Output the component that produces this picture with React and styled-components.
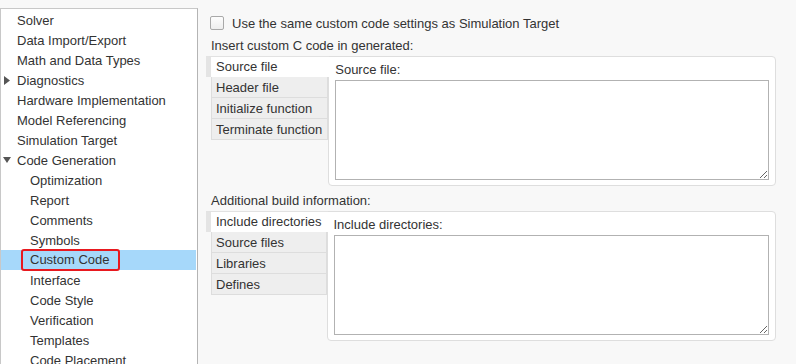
import styled, { createGlobalStyle } from "styled-components";

const GlobalStyle = createGlobalStyle`
    html, body {
        margin: 0;
        padding: 0;
        background: #f8f8f8;
    }
    body {
        font-family: "Liberation Sans", Arial, sans-serif;
        font-size: 13px;
        color: #333;
    }
`;

const Page = styled.div`
    display: flex;
    height: 364px;
    overflow: hidden;
`;

const Sidebar = styled.nav`
    flex: 0 0 198px;
    margin-top: 8px;
    padding-top: 1px;
    background: #fff;
    border-top: 1px solid #c8c8c8;
    border-left: 1px solid #c8c8c8;
    border-right: 1px solid #b4b4b4;
    box-sizing: border-box;
`;

const TreeRow = styled.div`
    display: flex;
    align-items: center;
    height: 20px;
    margin-right: 1px;
    padding-left: ${(p) => (p.$level ? "29px" : "3px")};
    background: ${(p) => (p.$selected ? "#a6d8fa" : "transparent")};
    white-space: nowrap;
`;

const Arrow = styled.span`
    display: flex;
    align-items: center;
    width: 13px;
    height: 20px;
    color: #555;
`;

const Marked = styled.span`
    display: inline-block;
    height: 22px;
    line-height: 18px;
    box-sizing: border-box;
    margin-left: -9px;
    padding: 0 9px 0 7px;
    border: 2px solid #e8191f;
    border-radius: 3px;
`;

const Main = styled.main`
    flex: 1;
    display: flex;
    flex-direction: column;
    padding: 13px 20px 0 8px;
`;

const CheckRow = styled.label`
    display: flex;
    align-items: center;
    gap: 8px;
    height: 20px;
    padding-left: 4px;
`;

const Box = styled.span`
    width: 14px;
    height: 14px;
    box-sizing: border-box;
    border: 1px solid #a9a9a9;
    border-radius: 2px;
    background: linear-gradient(#fdfdfd, #eeeeee);
`;

const SectionTitle = styled.div`
    height: 20px;
    line-height: 20px;
    padding-left: 5px;
    margin-top: ${(p) => p.$gap || "3px"};
`;

const TabGroup = styled.div`
    display: flex;
    height: 130px;
`;

const TabList = styled.div`
    display: flex;
    flex-direction: column;
`;

const Tab = styled.div`
    height: 21px;
    box-sizing: border-box;
    white-space: nowrap;
    ${(p) =>
        p.$active
            ? `
        position: relative;
        z-index: 1;
        margin-right: -1px;
        line-height: 20px;
        padding: 0 6px 0 5px;
        background: #fff;
        border-top: 1px solid #e2e2e2;
        border-left: 5px solid #e4e4e4;
    `
            : `
        margin-left: 5px;
        line-height: 22px;
        padding: 0 5px 0 4px;
        background: #eeeeee;
        border: 1px solid #dddddd;
        border-top: none;
    `}
`;

const Panel = styled.div`
    flex: 1;
    display: flex;
    flex-direction: column;
    padding: 3px 6px 5px 6px;
    background: #fff;
    border: 1px solid #dedede;
    border-radius: 0 4px 4px 4px;
`;

const FieldLabel = styled.div`
    height: 20px;
    line-height: 20px;
`;

const CodeArea = styled.textarea`
    display: block;
    width: 100%;
    height: 100px;
    box-sizing: border-box;
    border: 1px solid #b2b2b2;
    border-radius: 0;
    background: #fff;
    outline: none;
    resize: both;
    font: inherit;
`;

const RightTri = () => (
    <svg width="6" height="9" viewBox="0 0 6 9">
        <path d="M0 0 L6 4.5 L0 9 Z" fill="#555" />
    </svg>
);

const DownTri = () => (
    <svg width="8" height="6" viewBox="0 0 8 6" style={{ marginLeft: "-1px" }}>
        <path d="M0 0 L8 0 L4 6 Z" fill="#555" />
    </svg>
);

const tree = [
    { label: "Solver" },
    { label: "Data Import/Export" },
    { label: "Math and Data Types" },
    { label: "Diagnostics", arrow: "right" },
    { label: "Hardware Implementation" },
    { label: "Model Referencing" },
    { label: "Simulation Target" },
    { label: "Code Generation", arrow: "down" },
    { label: "Optimization", level: 1 },
    { label: "Report", level: 1 },
    { label: "Comments", level: 1 },
    { label: "Symbols", level: 1 },
    { label: "Custom Code", level: 1, selected: true },
    { label: "Interface", level: 1 },
    { label: "Code Style", level: 1 },
    { label: "Verification", level: 1 },
    { label: "Templates", level: 1 },
    { label: "Code Placement", level: 1 },
];

const TabSection = ({ tabs, field }) => (
    <TabGroup>
        <TabList>
            {tabs.map((t, i) => (
                <Tab key={t} $active={i === 0}>{t}</Tab>
            ))}
        </TabList>
        <Panel>
            <FieldLabel>{field}</FieldLabel>
            <CodeArea spellCheck={false} />
        </Panel>
    </TabGroup>
);

export default function App() {
    return (
        <>
            <GlobalStyle />
            <Page>
                <Sidebar>
                    {tree.map((item) => (
                        <TreeRow key={item.label} $level={item.level} $selected={item.selected}>
                            {!item.level && (
                                <Arrow>
                                    {item.arrow === "right" && <RightTri />}
                                    {item.arrow === "down" && <DownTri />}
                                </Arrow>
                            )}
                            {item.selected ? <Marked>{item.label}</Marked> : item.label}
                        </TreeRow>
                    ))}
                </Sidebar>
                <Main>
                    <CheckRow>
                        <Box />
                        <span>Use the same custom code settings as Simulation Target</span>
                    </CheckRow>
                    <SectionTitle>Insert custom C code in generated:</SectionTitle>
                    <TabSection
                        tabs={["Source file", "Header file", "Initialize function", "Terminate function"]}
                        field="Source file:"
                    />
                    <SectionTitle $gap="5px">Additional build information:</SectionTitle>
                    <TabSection
                        tabs={["Include directories", "Source files", "Libraries", "Defines"]}
                        field="Include directories:"
                    />
                </Main>
            </Page>
        </>
    );
}
